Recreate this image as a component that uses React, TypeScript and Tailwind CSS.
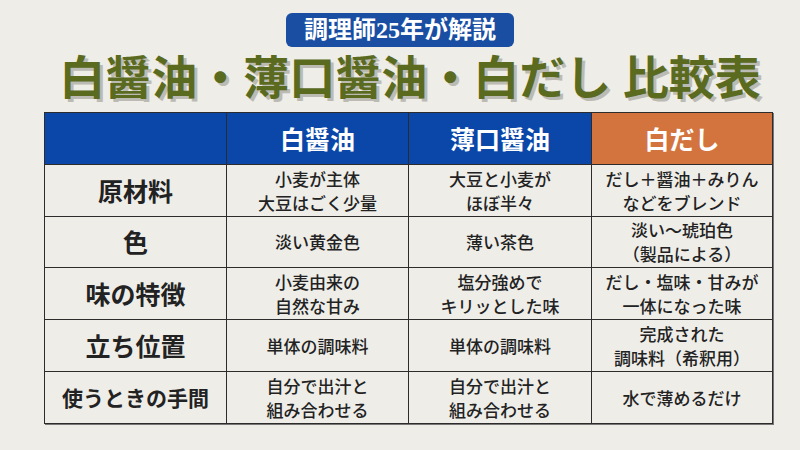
import { Fragment } from "react";

const rows = [
  { label: "原材料", small: false, cells: [["小麦が主体", "大豆はごく少量"], ["大豆と小麦が", "ほぼ半々"], ["だし＋醤油＋みりん", "などをブレンド"]] },
  { label: "色", small: false, cells: [["淡い黄金色"], ["薄い茶色"], ["淡い〜琥珀色", "（製品による）"]] },
  { label: "味の特徴", small: false, cells: [["小麦由来の", "自然な甘み"], ["塩分強めで", "キリッとした味"], ["だし・塩味・甘みが", "一体になった味"]] },
  { label: "立ち位置", small: false, cells: [["単体の調味料"], ["単体の調味料"], ["完成された", "調味料（希釈用）"]] },
  { label: "使うときの手間", small: true, cells: [["自分で出汁と", "組み合わせる"], ["自分で出汁と", "組み合わせる"], ["水で薄めるだけ"]] },
];

const App = () => {
  return (
    <div className="w-[800px] h-[450px] bg-[#eeede8] overflow-hidden font-['Noto_Sans_CJK_JP',sans-serif] text-[#222]">
      <div className="flex justify-center pt-[13px]">
        <div className="w-[228px] h-[34px] rounded-[6px] bg-[#1a4ea3] flex items-center justify-center text-white font-bold text-[24px] leading-none font-['Liberation_Serif','Noto_Sans_CJK_JP',serif]">
          調理師25年が解説
        </div>
      </div>

      <h1 className="mt-[4px] pl-[20px] text-center text-[46px] leading-[56px] font-bold text-[#5a6a1e] [text-shadow:3px_3px_0_#bcbbb3] font-['Liberation_Serif','Noto_Sans_CJK_JP',serif]">
        白醤油・薄口醤油・白だし 比較表
      </h1>

      <div className="ml-[44px] mt-[5px] w-[729px] grid grid-cols-[182px_182px_183px_181px] grid-rows-[52px_52px_51px_52px_52px_52px] border-t border-l border-[#2c2c2c] shadow-[1px_1px_0_#777]">
        <div className="bg-[#0b47a8] border-r border-b border-[#2c2c2c]" />
        <div className="bg-[#0b47a8] border-r border-b border-[#2c2c2c] flex items-center justify-center text-white font-bold text-[25px]">白醤油</div>
        <div className="bg-[#0b47a8] border-r border-b border-[#2c2c2c] flex items-center justify-center text-white font-bold text-[25px]">薄口醤油</div>
        <div className="bg-[#d3743f] border-r border-b border-[#2c2c2c] flex items-center justify-center text-white font-bold text-[25px]">白だし</div>

        {rows.map((row) => (
          <Fragment key={row.label}>
            <div className={`border-r border-b border-[#2c2c2c] flex items-center justify-center font-bold ${row.small ? "text-[21px]" : "text-[25px]"}`}>
              {row.label}
            </div>
            {row.cells.map((lines, i) => (
              <div key={i} className="border-r border-b border-[#2c2c2c] flex flex-col items-center justify-center text-[17px] leading-[24px] font-medium">
                {lines.map((l) => (
                  <span key={l}>{l}</span>
                ))}
              </div>
            ))}
          </Fragment>
        ))}
      </div>
    </div>
  );
};

export default App;
